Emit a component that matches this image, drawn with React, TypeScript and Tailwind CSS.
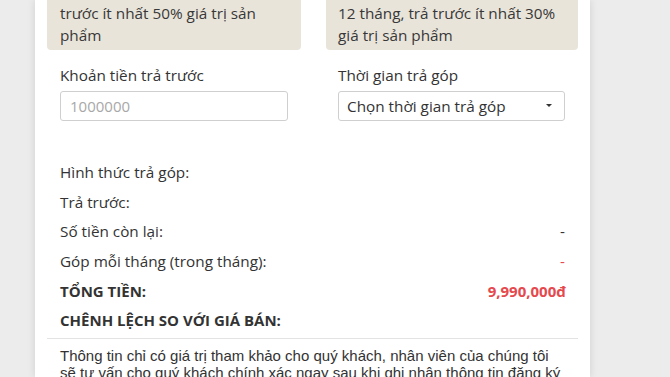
import React from "react";

const font = { fontFamily: '"Open Sans", "Noto Sans", sans-serif' };

function Row({ label, value, bold, valueClass }: { label: string; value?: string; bold?: boolean; valueClass?: string }) {
  return (
    <div className={`flex h-[29.5px] items-center justify-between ${bold ? "text-[15px] font-bold" : ""}`}>
      <span>{label}</span>
      {value !== undefined && <span className={valueClass}>{value}</span>}
    </div>
  );
}

export default function App() {
  return (
    <div className="h-[377px] w-[670px] overflow-hidden bg-[#ececec] text-[15.3px] text-[#333]" style={font}>
      <div className="ml-[35px] h-full w-[555px] bg-white px-[12px] shadow-[0_0_8px_rgba(0,0,0,0.12)]">
        <div className="grid grid-cols-[254px_252px] gap-x-[25px]">
          <div>
            <div className="rounded-b-[4px] bg-[#e9e4da] px-[13px] pb-[4px] pt-[2px] leading-[22px] text-[#383838]">
              <div>trước ít nhất 50% giá trị sản</div>
              <div>phẩm</div>
            </div>
            <div className="px-[13px]">
              <div className="mt-[14px] leading-[22px]">Khoản tiền trả trước</div>
              <input
                className="mt-[5px] h-[30px] w-full rounded-[3px] border border-[#cfcfcf] px-[9px] text-[15px] text-[#333] outline-none placeholder:text-[#a8a8a8]"
                placeholder="1000000"
                style={font}
              />
            </div>
          </div>
          <div>
            <div className="rounded-b-[4px] bg-[#e9e4da] px-[12px] pb-[4px] pt-[2px] leading-[22px] text-[#383838]">
              <div>12 tháng, trả trước ít nhất 30%</div>
              <div>giá trị sản phẩm</div>
            </div>
            <div className="pl-[12px] pr-[13px]">
              <div className="mt-[14px] leading-[22px]">Thời gian trả góp</div>
              <div className="mt-[5px] flex h-[30px] items-center justify-between rounded-[3px] border border-[#cfcfcf] pl-[8px] pr-[12px] text-[#333]">
                <span>Chọn thời gian trả góp</span>
                <span className="mb-[1px] h-0 w-0 border-x-[3px] border-t-[3px] border-x-transparent border-t-[#333]" />
              </div>
            </div>
          </div>
        </div>

        <div className="mt-[37px] pl-[13px] pr-[12px]">
          <Row label="Hình thức trả góp:" />
          <Row label="Trả trước:" />
          <Row label="Số tiền còn lại:" value="-" valueClass="pr-[1px]" />
          <Row label="Góp mỗi tháng (trong tháng):" value="-" valueClass="pr-[1px] text-[#e5484d]" />
          <Row label="TỔNG TIỀN:" value="9,990,000đ" bold valueClass="text-[#e5484d]" />
          <Row label="CHÊNH LỆCH SO VỚI GIÁ BÁN:" bold />
        </div>
        <div className="mt-[3px] border-t border-[#e3e3e3]" />
        <div
          className="px-[13px] pt-[8px] text-[15px] leading-[17px] text-[#333]"
          style={{ fontFamily: '"Liberation Sans", Arial, sans-serif' }}
        >
          Thông tin chỉ có giá trị tham khảo cho quý khách, nhân viên của chúng tôi sẽ tư vấn cho quý khách chính xác ngay sau khi ghi nhận thông tin đăng ký bên dưới.
        </div>
      </div>
    </div>
  );
}
